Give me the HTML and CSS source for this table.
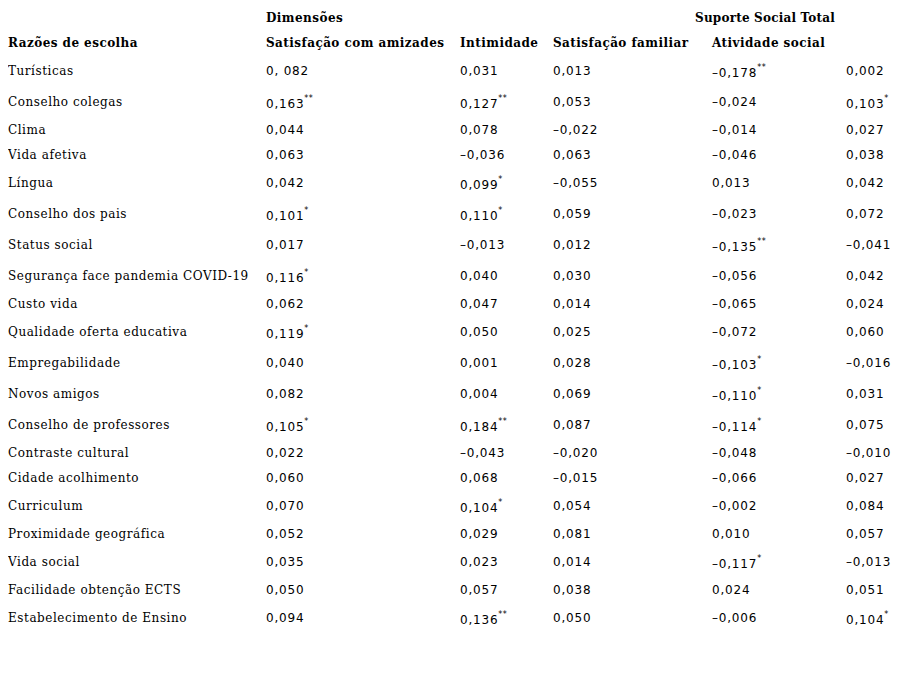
FILE: index.html
```html
<!DOCTYPE html>
<html lang="pt">
<head>
<meta charset="utf-8">
<title>Razões de escolha</title>
<link rel="stylesheet" href="styles.css">
</head>
<body>
<table class="tbl">
<colgroup>
<col class="c0"><col class="c1"><col class="c2"><col class="c3"><col class="c4"><col class="c5">
</colgroup>
<thead>
<tr class="h">
<th></th><th class="hd">Dimensões</th><th></th><th></th><th class="hd"><div class="right">Suporte Social Total</div></th><th></th>
</tr>
<tr class="h">
<th class="hd">Razões de escolha</th><th class="hd">Satisfação com amizades</th><th class="hd">Intimidade</th><th class="hd">Satisfação familiar</th><th class="hd">Atividade social</th><th></th>
</tr>
</thead>
<tbody>
<tr class="rs"><td class="lab">Turísticas</td><td class="v">0, 082</td><td class="v">0,031</td><td class="v">0,013</td><td class="v s">–0,178<sup>**</sup></td><td class="v">0,002</td></tr>
<tr class="rs"><td class="lab">Conselho colegas</td><td class="v s">0,163<sup>**</sup></td><td class="v s">0,127<sup>**</sup></td><td class="v">0,053</td><td class="v">–0,024</td><td class="v s">0,103<sup>*</sup></td></tr>
<tr class="r"><td class="lab">Clima</td><td class="v">0,044</td><td class="v">0,078</td><td class="v">–0,022</td><td class="v">–0,014</td><td class="v">0,027</td></tr>
<tr class="r"><td class="lab">Vida afetiva</td><td class="v">0,063</td><td class="v">–0,036</td><td class="v">0,063</td><td class="v">–0,046</td><td class="v">0,038</td></tr>
<tr class="rs"><td class="lab">Língua</td><td class="v">0,042</td><td class="v s">0,099<sup>*</sup></td><td class="v">–0,055</td><td class="v">0,013</td><td class="v">0,042</td></tr>
<tr class="rs"><td class="lab">Conselho dos pais</td><td class="v s">0,101<sup>*</sup></td><td class="v s">0,110<sup>*</sup></td><td class="v">0,059</td><td class="v">–0,023</td><td class="v">0,072</td></tr>
<tr class="rs"><td class="lab">Status social</td><td class="v">0,017</td><td class="v">–0,013</td><td class="v">0,012</td><td class="v s">–0,135<sup>**</sup></td><td class="v">–0,041</td></tr>
<tr class="rs"><td class="lab">Segurança face pandemia COVID-19</td><td class="v s">0,116<sup>*</sup></td><td class="v">0,040</td><td class="v">0,030</td><td class="v">–0,056</td><td class="v">0,042</td></tr>
<tr class="r"><td class="lab">Custo vida</td><td class="v">0,062</td><td class="v">0,047</td><td class="v">0,014</td><td class="v">–0,065</td><td class="v">0,024</td></tr>
<tr class="rs"><td class="lab">Qualidade oferta educativa</td><td class="v s">0,119<sup>*</sup></td><td class="v">0,050</td><td class="v">0,025</td><td class="v">–0,072</td><td class="v">0,060</td></tr>
<tr class="rs"><td class="lab">Empregabilidade</td><td class="v">0,040</td><td class="v">0,001</td><td class="v">0,028</td><td class="v s">–0,103<sup>*</sup></td><td class="v">–0,016</td></tr>
<tr class="rs"><td class="lab">Novos amigos</td><td class="v">0,082</td><td class="v">0,004</td><td class="v">0,069</td><td class="v s">–0,110<sup>*</sup></td><td class="v">0,031</td></tr>
<tr class="rs"><td class="lab">Conselho de professores</td><td class="v s">0,105<sup>*</sup></td><td class="v s">0,184<sup>**</sup></td><td class="v">0,087</td><td class="v s">–0,114<sup>*</sup></td><td class="v">0,075</td></tr>
<tr class="r"><td class="lab">Contraste cultural</td><td class="v">0,022</td><td class="v">–0,043</td><td class="v">–0,020</td><td class="v">–0,048</td><td class="v">–0,010</td></tr>
<tr class="r"><td class="lab">Cidade acolhimento</td><td class="v">0,060</td><td class="v">0,068</td><td class="v">–0,015</td><td class="v">–0,066</td><td class="v">0,027</td></tr>
<tr class="rs"><td class="lab">Curriculum</td><td class="v">0,070</td><td class="v s">0,104<sup>*</sup></td><td class="v">0,054</td><td class="v">–0,002</td><td class="v">0,084</td></tr>
<tr class="r"><td class="lab">Proximidade geográfica</td><td class="v">0,052</td><td class="v">0,029</td><td class="v">0,081</td><td class="v">0,010</td><td class="v">0,057</td></tr>
<tr class="rs"><td class="lab">Vida social</td><td class="v">0,035</td><td class="v">0,023</td><td class="v">0,014</td><td class="v s">–0,117<sup>*</sup></td><td class="v">–0,013</td></tr>
<tr class="r"><td class="lab">Facilidade obtenção ECTS</td><td class="v">0,050</td><td class="v">0,057</td><td class="v">0,038</td><td class="v">0,024</td><td class="v">0,051</td></tr>
<tr class="rs"><td class="lab">Estabelecimento de Ensino</td><td class="v">0,094</td><td class="v s">0,136<sup>**</sup></td><td class="v">0,050</td><td class="v">–0,006</td><td class="v s">0,104<sup>*</sup></td></tr>
</tbody>
</table>
</body>
</html>
```

FILE: styles.css
```css
html, body {
  background: #ffffff;
}
body {
  margin: 5px 8px 8px 8px;
  color: #000000;
  font-family: "DejaVu Serif", serif;
}
.tbl {
  border-collapse: collapse;
  border-spacing: 0;
  table-layout: fixed;
  width: 885px;
}
.c0 { width: 258px; }
.c1 { width: 194px; }
.c2 { width: 93px; }
.c3 { width: 159px; }
.c4 { width: 134px; }
.c5 { width: 47px; }
.tbl th, .tbl td {
  padding: 0;
  vertical-align: middle;
  text-align: left;
  white-space: nowrap;
}
.h { height: 25px; }
.r { height: 25px; }
.rs { height: 31px; }
.hd {
  font-family: "DejaVu Serif", serif;
  font-weight: bold;
  font-size: 12px;
  letter-spacing: 0.45px;
}
.right {
  display: flex;
  justify-content: flex-end;
  padding-right: 11px;
  letter-spacing: 0.2px;
}
.lab {
  font-family: "DejaVu Serif", serif;
  font-size: 12px;
  letter-spacing: 0.55px;
}
.v {
  font-family: "DejaVu Sans", sans-serif;
  font-size: 12px;
  letter-spacing: 0.8px;
}
.v.s {
  padding-top: 5px;
}
.v sup {
  font-size: 8px;
  line-height: 0;
  vertical-align: 7px;
  letter-spacing: 0.5px;
}
```
